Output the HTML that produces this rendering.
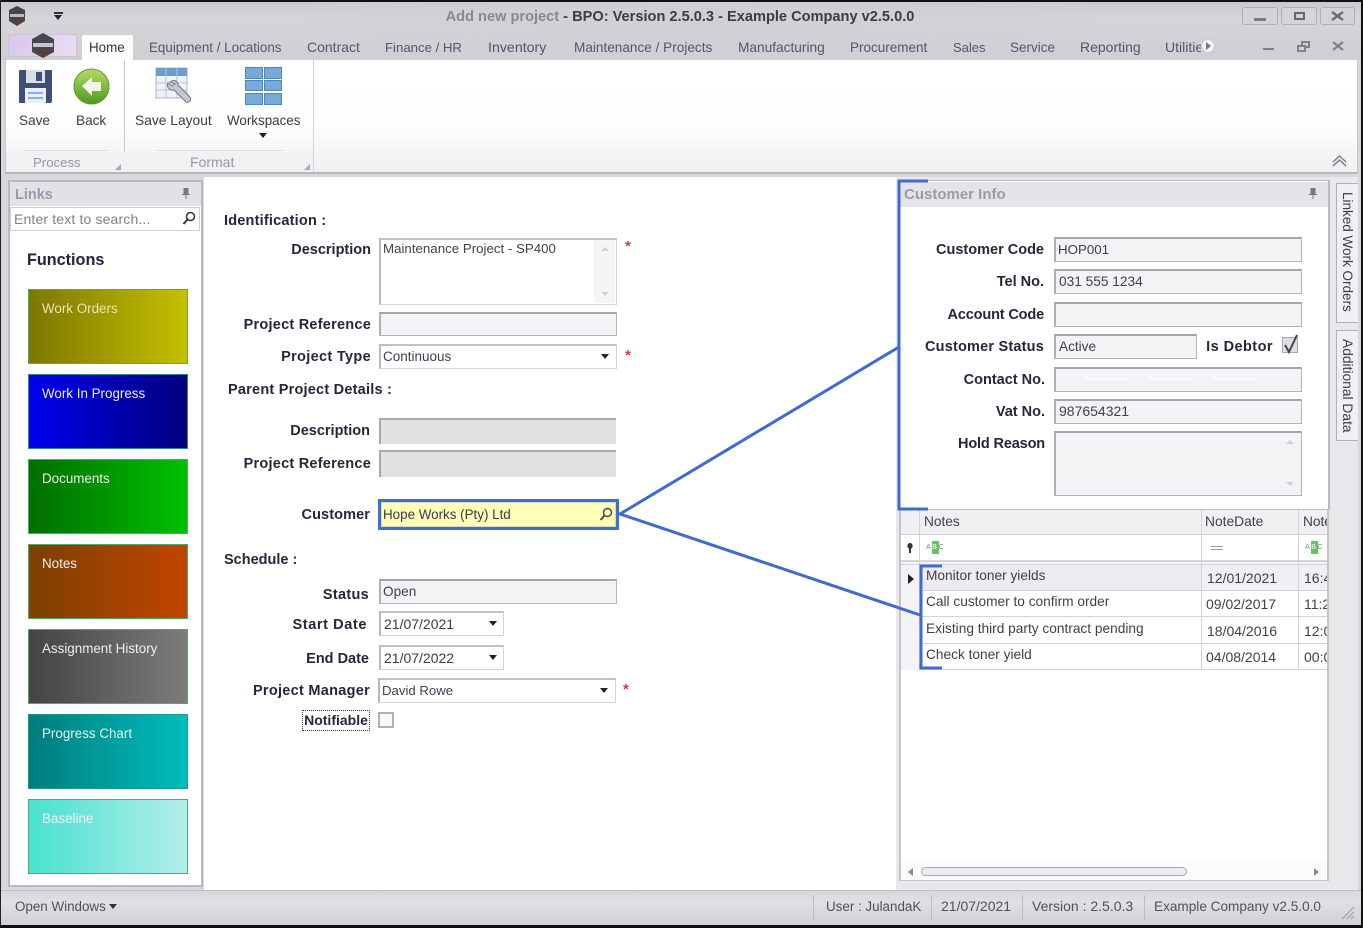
<!DOCTYPE html>
<html><head><meta charset="utf-8"><title>Add new project</title>
<style>
html,body{margin:0;padding:0;background:#000}
#a{position:relative;width:1363px;height:928px;overflow:hidden;background:#d8d8dc;font:14px "Liberation Sans",sans-serif;color:#3b3b4a;filter:blur(.3px)}
#a div,#a span.t{position:absolute;white-space:nowrap;box-sizing:border-box}
.tab{top:39px;height:18px;line-height:18px;color:#55566a;font-size:13.7px}
.l{font-weight:bold;color:#26263a;text-align:right;font-size:14.5px;line-height:18px;height:18px;margin-top:1px}
.h{font-weight:bold;color:#26263a;font-size:14.5px;line-height:18px;height:18px;margin-top:1px}
.f{border:1px solid #b4b4b8;border-top:2px solid #a6a6aa;border-left:2px solid #b0b0b4;background:#f3f3f5;line-height:20px;padding:1px 0 0 3px;color:#404050;font-size:13.6px}
.w{background:#fff;border-color:#c0c0c4 #d4d4d8 #d4d4d8 #b8b8bc}
.d{background:#e0e0e0;border-right:none;border-bottom:none;border-color:#a8a8ac}
.tile{left:28px;width:160px;height:75px;border:1px solid #55a868;color:#eee;padding:10px 0 0 13px;font-size:13.4px;line-height:18px}
.ar{width:0;height:0;border-left:4.5px solid transparent;border-right:4.5px solid transparent;border-top:5px solid #222}
.star{color:#e8303f;font-weight:bold;font-size:15px;line-height:15px;margin-top:-1px}
.rt{color:#40404e;line-height:18px;height:18px;font-size:13.6px}
.grid{background:#d4d4dc}
.cell{left:924px;color:#3f3f4d;font-size:13.7px;line-height:18px;height:18px}
.sb{color:#50505f;font-size:13.5px;line-height:18px;height:18px;top:898px}
.sep{top:895px;height:25px;width:1px;background:#bcbcc2}
.abc{font-size:7px;line-height:8px;height:8px;color:#60a060;letter-spacing:1.6px}
</style></head><body><div id="a">

<!-- title bar -->
<div style="left:0;top:0;width:1363px;height:60px;background:linear-gradient(#c9c9cd,#d5d5d8 30%,#cfcfd2)"></div>
<div style="left:300px;top:2px;width:800px;height:58px;background:linear-gradient(90deg,rgba(215,215,220,0),#cfcfd6 50%,rgba(215,215,220,0))"></div>
<svg style="position:absolute;left:8px;top:6px" width="18" height="20" viewBox="0 0 18 20"><path d="M9 0L17 4V15L9 20L1 15V4Z" fill="#46464a"/><path d="M2 8H16V11H2Z" fill="#bbb"/><path d="M7 14L11 14L9 19Z" fill="#8a2a2a"/></svg>
<div style="left:54px;top:12px;width:9px;height:2px;background:#333"></div>
<div class="ar" style="left:54px;top:15px;border-left-width:4px;border-right-width:4px"></div>
<div style="left:0;top:8px;width:1360px;height:18px;line-height:18px;text-align:center;font-weight:bold;font-size:14.6px;color:#3c3c48"><span style="color:#88888f">Add new project</span> - BPO: Version 2.5.0.3 - Example Company v2.5.0.0</div>

<div style="left:1242px;top:7px;width:36px;height:18px;border:1px solid #b0b0b4;border-radius:3px;background:#d4d4d8"></div>
<div style="left:1281px;top:7px;width:36px;height:18px;border:1px solid #b0b0b4;border-radius:3px;background:#d4d4d8"></div>
<div style="left:1320px;top:7px;width:35px;height:18px;border:1px solid #b0b0b4;border-radius:3px;background:#d4d4d8"></div>
<div style="left:1254px;top:18px;width:12px;height:3px;background:#7a7a82"></div>
<div style="left:1294px;top:12px;width:11px;height:8px;border:2px solid #66666e"></div>
<svg style="position:absolute;left:1331px;top:11px" width="13" height="10"><path d="M1 1L12 9M12 1L1 9" stroke="#6a6a72" stroke-width="2.4"/></svg>

<!-- tabs -->
<div style="left:8px;top:34px;width:69px;height:23px;background:linear-gradient(100deg,#d9c7ee,#e3d4f1 60%,#eadcf4);border:1px solid #c9c5d2;border-radius:2px"></div>
<svg style="position:absolute;left:30px;top:32px" width="26" height="27" viewBox="0 0 26 27"><path d="M13 1L24 7V20L13 26L2 20V7Z" fill="#48484c"/><path d="M3 11H23V15H3Z" fill="#c8c8cc"/><path d="M10 19H16L13 25Z" fill="#7c2a2a"/></svg>
<div style="left:81px;top:34px;width:53px;height:26px;background:#fdfdfe;border:1px solid #d0d0d4;border-bottom:none;border-radius:2px 2px 0 0"></div>
<div class="tab" style="left:89px;color:#333340;font-size:13.4px">Home</div>
<div class="tab" style="left:149px;font-size:13.4px">Equipment / Locations</div>
<div class="tab" style="left:307px;top:38px;font-size:14px">Contract</div>
<div class="tab" style="left:385px;font-size:13.2px">Finance / HR</div>
<div class="tab" style="left:488px;font-size:14.2px">Inventory</div>
<div class="tab" style="left:574px;font-size:13.6px">Maintenance / Projects</div>
<div class="tab" style="left:738px">Manufacturing</div>
<div class="tab" style="left:850px;font-size:13.5px">Procurement</div>
<div class="tab" style="left:953px;font-size:13px">Sales</div>
<div class="tab" style="left:1010px;font-size:13.5px">Service</div>
<div class="tab" style="left:1080px;top:38px;font-size:14px">Reporting</div>
<div class="tab" style="left:1165px;top:38px;width:36px;overflow:hidden;font-size:14px">Utilities</div>
<div style="left:1201px;top:39px;width:14px;height:14px;border-radius:50%;background:#f4f4f6;border:1px solid #c8c8cc"></div>
<div style="left:1206px;top:42px;width:0;height:0;border-left:5px solid #77777f;border-top:4px solid transparent;border-bottom:4px solid transparent"></div>
<div style="left:1263px;top:48px;width:11px;height:2px;background:#808088"></div>
<div style="left:1301px;top:41px;width:9px;height:7px;border:2px solid #808088"></div>
<div style="left:1297px;top:45px;width:9px;height:7px;border:2px solid #808088;background:#d4d4d8"></div>
<svg style="position:absolute;left:1332px;top:41px" width="12" height="10"><path d="M1 1L11 9M11 1L1 9" stroke="#808088" stroke-width="2.2"/></svg>

<!-- ribbon -->
<div style="left:5px;top:60px;width:1353px;height:114px;background:linear-gradient(#fff,#fefefe 55%,#f0f0f2);border:1px solid #c8c8cc;border-top:none;border-bottom:2px solid #b8b8bc"></div>
<div style="left:124px;top:60px;width:1px;height:112px;background:#c8c8cd"></div>
<div style="left:313px;top:60px;width:1px;height:112px;background:#d4d4d8"></div>
<div style="left:6px;top:152px;width:307px;height:20px;background:#f1f1f3"></div>
<div style="left:24px;top:150px;width:84px;height:1px;background:#dcdce0"></div>
<div style="left:157px;top:150px;width:126px;height:1px;background:#dcdce0"></div>

<!-- save icon -->
<svg style="position:absolute;left:18px;top:69px" width="35" height="35" viewBox="0 0 35 35"><path d="M1 2Q1 1 2 1H33Q34 1 34 2V32Q34 34 32 34H2Q1 34 1 33Z" fill="#3d4f74"/><rect x="8" y="1" width="19" height="13" fill="#d9dde4"/><rect x="18" y="3" width="6" height="9" fill="#3d4f74"/><rect x="7" y="19" width="21" height="15" fill="#e9eef6"/><rect x="10" y="23" width="15" height="2" fill="#7fb0df"/><rect x="10" y="28" width="15" height="2" fill="#7fb0df"/></svg>
<!-- back icon -->
<svg style="position:absolute;left:73px;top:68px" width="37" height="37" viewBox="0 0 37 37"><defs><linearGradient id="g" x1="0" y1="0" x2="0" y2="1"><stop offset="0" stop-color="#b6d964"/><stop offset="1" stop-color="#4e9a24"/></linearGradient></defs><circle cx="18.5" cy="18.5" r="17.5" fill="url(#g)" stroke="#5a9a2c"/><path d="M9 18L19 9V14H28V23H19V28Z" fill="#f0f5ea"/></svg>
<!-- layout icon -->
<svg style="position:absolute;left:155px;top:67px" width="38" height="38" viewBox="0 0 38 38"><rect x="1" y="1" width="31" height="30" fill="#eef2f7" stroke="#a7b7cb"/><rect x="1" y="1" width="31" height="8" fill="#6b9ccd"/><path d="M1 16H32M1 23H32M11 1V31M22 1V31" stroke="#b8c6d8" fill="none"/><path d="M15 15C19 12 23 14 23 18L35 30Q37 33 34 35Q32 36 30 34L19 23C14 24 11 19 13 16L17 19L20 17Z" fill="#c4c8ce" stroke="#74787f"/></svg>
<!-- workspaces icon -->
<svg style="position:absolute;left:245px;top:67px" width="37" height="38" viewBox="0 0 37 38"><g fill="#79a9d9" stroke="#4d86bd"><rect x=".5" y=".5" width="17" height="11"/><rect x="19.5" y=".5" width="17" height="11"/><rect x=".5" y="13.5" width="17" height="10"/><rect x="19.5" y="13.5" width="17" height="10"/><rect x=".5" y="26.5" width="17" height="11"/><rect x="19.5" y="26.5" width="17" height="11"/></g></svg>

<div class="rt" style="left:19px;top:112px;color:#3a3a48">Save</div>
<div class="rt" style="left:76px;top:112px;color:#3a3a48">Back</div>
<div class="rt" style="left:135px;top:112px;color:#3a3a48;font-size:13.8px">Save Layout</div>
<div class="rt" style="left:227px;top:112px;color:#3a3a48;font-size:13.4px">Workspaces</div>
<div class="ar" style="left:259px;top:133px"></div>
<div class="rt" style="left:33px;top:154px;color:#97979f;font-size:13.2px">Process</div>
<div class="rt" style="left:190px;top:153px;color:#97979f;font-size:14px">Format</div>
<svg style="position:absolute;left:114px;top:163px" width="8" height="8"><path d="M7 1V7H1Z" fill="#a8a8ae"/></svg>
<svg style="position:absolute;left:303px;top:163px" width="8" height="8"><path d="M7 1V7H1Z" fill="#a8a8ae"/></svg>
<svg style="position:absolute;left:1331px;top:154px" width="17" height="13"><path d="M2 8L8.5 2L15 8M2 12L8.5 6L15 12" fill="none" stroke="#7d7d85" stroke-width="1.5"/></svg>

<!-- main white -->
<div style="left:204px;top:177px;width:692px;height:713px;background:#fff"></div>

<!-- Links panel -->
<div style="left:8px;top:180px;width:195px;height:707px;background:#fff;border:2px solid #b9b9be"></div>
<div style="left:10px;top:182px;width:191px;height:24px;background:#e2e2e6"></div>
<div style="left:15px;top:186px;height:18px;line-height:18px;font-weight:bold;font-size:14.5px;color:#9a9aa6">Links</div>
<svg style="position:absolute;left:181px;top:187px" width="10" height="13"><path d="M2.5 1H7.5V7H9V8H5.5V12H4.5V8H1V7H2.5Z" fill="#77777f"/></svg>
<div style="left:10px;top:207px;width:190px;height:24px;background:#fff;border:1px solid #cfcfd4;line-height:22px;padding-left:3px;color:#7f7f89;letter-spacing:.15px">Enter text to search...</div>
<svg style="position:absolute;left:182px;top:211px" width="14" height="15"><circle cx="8.5" cy="5.5" r="4" fill="none" stroke="#333" stroke-width="1.5"/><path d="M5.5 8.5L1.5 13" stroke="#333" stroke-width="2"/></svg>
<div style="left:27px;top:250px;height:20px;line-height:20px;font-weight:bold;font-size:16.2px;color:#22223a">Functions</div>

<div class="tile" style="top:289px;background:linear-gradient(90deg,#7c7800,#c4c000);color:#e8e6b4">Work Orders</div>
<div class="tile" style="top:374px;background:linear-gradient(90deg,#0000ee,#00007c);border-color:#2a8a8a">Work In Progress</div>
<div class="tile" style="top:459px;background:linear-gradient(90deg,#006e00,#00c000)">Documents</div>
<div class="tile" style="top:544px;background:linear-gradient(90deg,#7c4000,#c24400)">Notes</div>
<div class="tile" style="top:629px;background:linear-gradient(90deg,#444,#7c7c7c)">Assignment History</div>
<div class="tile" style="top:714px;background:linear-gradient(90deg,#007c7c,#00bebe);border-color:#1a9a8a">Progress Chart</div>
<div class="tile" style="top:799px;background:linear-gradient(90deg,#48e2cf,#b4eeea)">Baseline</div>

<!-- Center form -->
<div class="h" style="left:224px;top:211px;letter-spacing:.2px">Identification :</div>
<div class="l" style="left:210px;width:161px;top:240px">Description</div>
<div class="f w" style="left:379px;top:238px;width:238px;height:67px;line-height:16px;padding-left:2px;font-size:13.3px">Maintenance Project - SP400</div>
<div style="left:594px;top:240px;width:21px;height:63px;background:#f5f5f7"></div>
<div style="left:601px;top:247px;width:0;height:0;border-left:4px solid transparent;border-right:4px solid transparent;border-bottom:4px solid #d0d0d4"></div>
<div style="left:601px;top:292px;width:0;height:0;border-left:4px solid transparent;border-right:4px solid transparent;border-top:4px solid #d0d0d4"></div>
<div class="star" style="left:625px;top:240px">*</div>

<div class="l" style="left:210px;width:161px;top:315px;letter-spacing:.24px">Project Reference</div>
<div class="f" style="left:379px;top:312px;width:238px;height:24px"></div>

<div class="l" style="left:210px;width:161px;top:347px;letter-spacing:.33px">Project Type</div>
<div class="f w" style="left:379px;top:344px;width:238px;height:25px;padding-left:2px;font-size:13.5px">Continuous</div>
<div class="ar" style="left:601px;top:354px"></div>
<div class="star" style="left:625px;top:349px">*</div>

<div class="h" style="left:228px;top:380px;letter-spacing:.22px">Parent Project Details :</div>
<div class="l" style="left:210px;width:160px;top:421px">Description</div>
<div class="f d" style="left:379px;top:418px;width:237px;height:26px"></div>
<div class="l" style="left:210px;width:161px;top:454px;letter-spacing:.24px">Project Reference</div>
<div class="f d" style="left:379px;top:450px;width:237px;height:27px"></div>

<div class="l" style="left:210px;width:160px;top:505px;letter-spacing:.1px">Customer</div>
<div style="left:378px;top:499px;width:241px;height:31px;background:#fefeb8;border:3px solid #3f6fcf;box-shadow:inset 0 0 0 1px #d8d8c0;line-height:26px;padding-left:2px;color:#3a3a48;font-size:13.4px">Hope Works (Pty) Ltd</div>
<svg style="position:absolute;left:599px;top:507px" width="14" height="14"><circle cx="8.5" cy="5.5" r="4" fill="none" stroke="#444" stroke-width="1.4"/><path d="M5.5 8.5L1.5 13" stroke="#444" stroke-width="1.8"/></svg>

<div class="h" style="left:224px;top:550px">Schedule :</div>
<div class="l" style="left:210px;width:159px;top:585px;letter-spacing:.3px">Status</div>
<div class="f" style="left:379px;top:579px;width:238px;height:25px;line-height:19px;padding-left:2px">Open</div>
<div class="l" style="left:210px;width:157px;top:615px;letter-spacing:.6px">Start Date</div>
<div class="f w" style="left:379px;top:611px;width:125px;height:25px;color:#3a3a48;font-size:14px">21/07/2021</div>
<div class="ar" style="left:489px;top:621px"></div>
<div class="l" style="left:210px;width:159px;top:649px">End Date</div>
<div class="f w" style="left:379px;top:645px;width:125px;height:25px;color:#3a3a48;font-size:14px">21/07/2022</div>
<div class="ar" style="left:489px;top:655px"></div>
<div class="l" style="left:210px;width:160px;top:681px;letter-spacing:.28px">Project Manager</div>
<div class="f w" style="left:378px;top:678px;width:238px;height:25px;padding-left:2px;font-size:13.2px">David Rowe</div>
<div class="ar" style="left:600px;top:688px"></div>
<div class="star" style="left:623px;top:683px">*</div>
<div class="l" style="left:302px;width:68px;top:709px;height:21px;line-height:19px;border:1px dotted #333;text-align:center;font-size:14px;white-space:nowrap;overflow:hidden">Notifiable</div>
<div style="left:378px;top:712px;width:16px;height:16px;border:2px solid #b0b0b6;background:#f8f8f8"></div>

<!-- right side area -->
<div style="left:896px;top:177px;width:440px;height:713px;background:#e8e8ea"></div>
<div style="left:1336px;top:177px;width:22px;height:713px;background:#e8e8ea"></div>

<!-- customer info panel -->
<div style="left:898px;top:180px;width:432px;height:330px;background:#fff;border:1px solid #b9b9be;border-left:none;border-right:2px solid #b9b9be"></div>
<div style="left:899px;top:182px;width:429px;height:25px;background:#e4e4e8"></div>
<div style="left:904px;top:186px;height:18px;line-height:18px;font-weight:bold;font-size:15px;color:#9a9aa8">Customer Info</div>
<svg style="position:absolute;left:1308px;top:187px" width="10" height="13"><path d="M2.5 1H7.5V7H9V8H5.5V12H4.5V8H1V7H2.5Z" fill="#77777f"/></svg>

<div class="l" style="left:900px;width:144px;top:240px">Customer Code</div>
<div class="f" style="left:1054px;top:237px;width:248px;height:25px;padding-left:2px;font-size:13.3px">HOP001</div>
<div class="l" style="left:900px;width:144px;top:272px">Tel No.</div>
<div class="f" style="left:1054px;top:269px;width:248px;height:25px;font-size:13.7px">031 555 1234</div>
<div class="l" style="left:900px;width:144px;top:305px;letter-spacing:-.15px">Account Code</div>
<div class="f" style="left:1054px;top:302px;width:248px;height:25px"></div>
<div class="l" style="left:900px;width:144px;top:337px;letter-spacing:.2px">Customer Status</div>
<div class="f" style="left:1054px;top:334px;width:143px;height:25px">Active</div>
<div class="l" style="left:1200px;width:73px;top:337px;letter-spacing:.45px">Is Debtor</div>
<div style="left:1282px;top:337px;width:16px;height:16px;border:1px solid #a8a8ae;background:#dfdfe3"></div>
<svg style="position:absolute;left:1282px;top:334px" width="18" height="20"><path d="M3 11L7 18L15 1" fill="none" stroke="#444" stroke-width="2"/></svg>
<div class="l" style="left:900px;width:145px;top:370px">Contact No.</div>
<div class="f" style="left:1054px;top:367px;width:248px;height:25px"></div>
<div style="left:1084px;top:377px;width:46px;height:3px;background:#f9f9fa"></div>
<div style="left:1148px;top:377px;width:46px;height:3px;background:#f9f9fa"></div>
<div style="left:1212px;top:377px;width:46px;height:3px;background:#f9f9fa"></div>
<div class="l" style="left:900px;width:145px;top:402px">Vat No.</div>
<div class="f" style="left:1054px;top:399px;width:248px;height:25px;padding-top:0;font-size:14px">987654321</div>
<div class="l" style="left:900px;width:145px;top:434px;letter-spacing:-.15px">Hold Reason</div>
<div class="f" style="left:1054px;top:431px;width:248px;height:65px"></div>
<div style="left:1286px;top:440px;width:0;height:0;border-left:4px solid transparent;border-right:4px solid transparent;border-bottom:4px solid #d0d0d4"></div>
<div style="left:1286px;top:482px;width:0;height:0;border-left:4px solid transparent;border-right:4px solid transparent;border-top:4px solid #d0d0d4"></div>

<!-- grid -->
<div style="left:899px;top:509px;width:430px;height:372px;background:#fff;border:2px solid #c4c4c9;border-top:1px solid #b9b9be"></div>
<div style="left:901px;top:510px;width:426px;height:25px;background:#f0f0f2;border-bottom:1px solid #d0d0d6"></div>
<div style="left:901px;top:535px;width:426px;height:27px;background:#fff;border-bottom:2px solid #d4d4da"></div>
<div style="left:901px;top:565px;width:300px;height:25px;background:#ececee"></div>
<div style="left:1201px;top:565px;width:126px;height:25px;background:#f0f0f2"></div>
<div style="left:901px;top:562px;width:426px;height:3px;background:#f3f3f5;border-bottom:1px solid #d4d4da"></div>
<div class="grid" style="left:901px;top:590px;width:426px;height:1px"></div>
<div class="grid" style="left:901px;top:616px;width:426px;height:1px"></div>
<div class="grid" style="left:901px;top:643px;width:426px;height:1px"></div>
<div class="grid" style="left:901px;top:669px;width:426px;height:1px"></div>
<div style="left:901px;top:565px;width:19px;height:105px;background:#f4f4f6"></div>
<div class="grid" style="left:919px;top:510px;width:1px;height:160px"></div>
<div class="grid" style="left:1201px;top:510px;width:1px;height:160px"></div>
<div class="grid" style="left:1298px;top:510px;width:1px;height:160px"></div>
<div class="cell" style="left:924px;top:513px">Notes</div>
<div class="cell" style="left:1205px;top:513px;font-size:13.8px">NoteDate</div>
<div class="cell" style="left:1303px;top:513px;width:24px;overflow:hidden">NoteTime</div>
<svg style="position:absolute;left:906px;top:543px" width="8" height="11"><circle cx="4" cy="2.5" r="2.5" fill="#333"/><path d="M1 3H7L5 6V10H3V6Z" fill="#333"/></svg>
<div style="left:932px;top:541px;width:7px;height:13px;background:#69c069"></div>
<div class="abc" style="left:926px;top:544px">A<span style="color:#fff">B</span>C</div>
<div style="left:1311px;top:541px;width:7px;height:13px;background:#69c069"></div>
<div class="abc" style="left:1305px;top:544px">A<span style="color:#fff">B</span>C</div>
<div style="left:1211px;top:546px;width:12px;height:4px;border-top:1px solid #999;border-bottom:1px solid #999"></div>
<div style="left:908px;top:574px;width:0;height:0;border-left:6px solid #222;border-top:5px solid transparent;border-bottom:5px solid transparent"></div>
<div class="cell" style="left:926px;top:567px">Monitor toner yields</div>
<div class="cell" style="left:926px;top:593px">Call customer to confirm order</div>
<div class="cell" style="left:926px;top:620px">Existing third party contract pending</div>
<div class="cell" style="left:926px;top:646px">Check toner yield</div>
<div class="cell" style="left:1207px;top:569px;font-size:14px">12/01/2021</div>
<div class="cell" style="left:1206px;top:595px;font-size:14px">09/02/2017</div>
<div class="cell" style="left:1207px;top:622px;font-size:14px">18/04/2016</div>
<div class="cell" style="left:1206px;top:648px;font-size:14px">04/08/2014</div>
<div class="cell" style="left:1304px;top:569px;width:23px;overflow:hidden;font-size:14px">16:45</div>
<div class="cell" style="left:1304px;top:595px;width:23px;overflow:hidden;font-size:14px">11:20</div>
<div class="cell" style="left:1304px;top:622px;width:23px;overflow:hidden;font-size:14px">12:00</div>
<div class="cell" style="left:1304px;top:648px;width:23px;overflow:hidden;font-size:14px">00:00</div>
<!-- grid scrollbar -->
<div style="left:901px;top:861px;width:426px;height:19px;background:#fbfbfc"></div>
<div style="left:921px;top:867px;width:266px;height:9px;border:1px solid #a8a8b0;border-radius:5px;background:#ececf0"></div>
<div style="left:908px;top:868px;width:0;height:0;border-right:5px solid #8a8a90;border-top:4px solid transparent;border-bottom:4px solid transparent"></div>
<div style="left:1314px;top:868px;width:0;height:0;border-left:5px solid #8a8a90;border-top:4px solid transparent;border-bottom:4px solid transparent"></div>

<!-- side tabs -->
<div style="left:1336px;top:183px;width:22px;height:140px;background:#f0f0f2;border:1px solid #b0b0b6;border-right:none"></div>
<div style="left:1336px;top:330px;width:22px;height:111px;background:#f0f0f2;border:1px solid #b0b0b6;border-right:none"></div>
<div style="left:1338px;top:192px;height:18px;line-height:18px;color:#3c3c4a;font-size:13.5px;transform-origin:0 0;transform:translate(18px,0) rotate(90deg)">Linked Work Orders</div>
<div style="left:1338px;top:339px;height:18px;line-height:18px;color:#3c3c4a;font-size:13.8px;transform-origin:0 0;transform:translate(18px,0) rotate(90deg)">Additional Data</div>

<!-- blue annotations -->
<svg style="position:absolute;left:0;top:0" width="1363" height="928" fill="none" stroke="#3f6ad0" stroke-width="3">
<path d="M928 181H899V509H928"/>
<path d="M899 347L620 514L920 615"/>
<path d="M942 566H921V668H942"/>
</svg>

<!-- status bar -->
<div style="left:0;top:890px;width:1363px;height:36px;background:linear-gradient(#d9d9dd,#e0e0e3 30%,#d0d0d5);border-top:1px solid #bdbdc2"></div>
<div class="sb" style="left:15px;font-size:13.4px">Open Windows</div>
<div class="ar" style="left:109px;top:904px;border-top-color:#333"></div>
<div class="sep" style="left:813px"></div>
<div class="sep" style="left:931px"></div>
<div class="sep" style="left:1022px"></div>
<div class="sep" style="left:1144px"></div>
<div class="sb" style="left:826px;font-size:13.4px">User : JulandaK</div>
<div class="sb" style="left:941px;top:897px;font-size:14px">21/07/2021</div>
<div class="sb" style="left:1032px;top:897px;font-size:14px">Version : 2.5.0.3</div>
<div class="sb" style="left:1154px;font-size:13.6px">Example Company v2.5.0.0</div>
<svg style="position:absolute;left:1340px;top:905px" width="16" height="16"><path d="M14 2L2 14M14 7L7 14M14 11L11 14" stroke="#a8a8ae" stroke-width="1.3"/></svg>

<!-- screen edge -->
<div style="left:0;top:0;width:1363px;height:2px;background:#111"></div>
<div style="left:0;top:0;width:1px;height:928px;background:#222"></div>
<div style="left:1361px;top:0;width:2px;height:928px;background:#111"></div>
<div style="left:0;top:925px;width:1363px;height:3px;background:#111"></div>
</div></body></html>
